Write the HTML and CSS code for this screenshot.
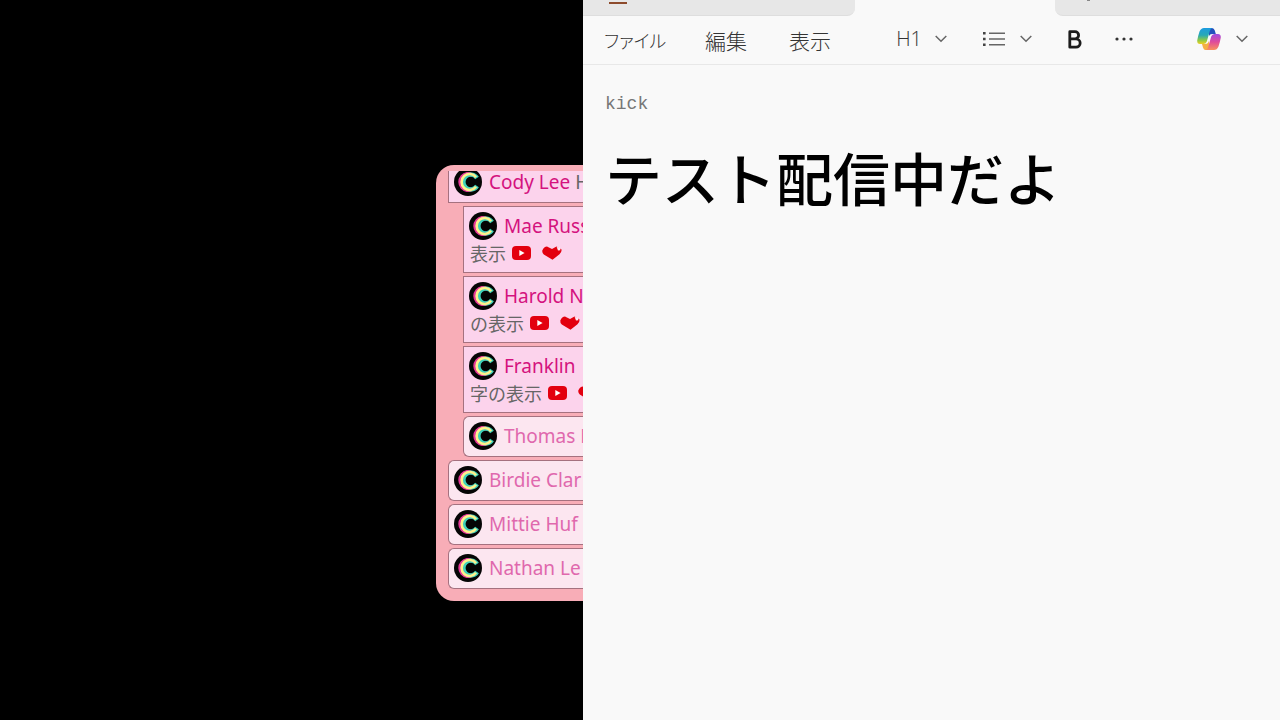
FILE: index.html
```html
<!DOCTYPE html>
<html lang="ja">
<head>
<meta charset="utf-8">
<meta name="viewport" content="width=device-width, initial-scale=1">
<title>配信画面</title>
<link rel="stylesheet" href="styles.css">
</head>
<body>
<svg class="defs" aria-hidden="true">
  <symbol id="avatar" viewBox="0 0 28 28">
    <circle cx="14" cy="14" r="14" fill="#050505"/>
    <g fill="none">
      <path d="M18.5 7.2A8 8 0 1 0 18.5 20.8" stroke="#e83898" stroke-width="4"/>
      <path d="M23 10A7.4 7.4 0 1 0 23 18" stroke="#3fd2ba" stroke-width="4.4"/>
      <path d="M22 9.2A8 8 0 1 0 22 18.8" stroke="#fff08c" stroke-width="2.6"/>
    </g>
  </symbol>
  <symbol id="video" viewBox="0 0 19 14">
    <rect width="19" height="14" rx="4" fill="#e3000f"/>
    <path d="M7.3 4 12.6 7 7.3 10Z" fill="#fff"/>
  </symbol>
  <symbol id="heart" viewBox="0 0 20 14">
    <path d="M.3 4.5Q2 .6 5 .6L10 3 14.5.6 19.6 3.6Q19.8 6 17.5 8.2L10.5 13.8 1.8 8.4Q0 7 .3 4.5Z" fill="#e3000f"/>
    <path d="M14.7 1 18 1.5 18.4 4.2 16 4.6Z" fill="#ffe9f4"/>
  </symbol>
  <symbol id="chevron" viewBox="0 0 12 8">
    <path d="M.7 1 6 6.3 11.3 1" fill="none" stroke="currentColor" stroke-width="1.5"/>
  </symbol>
</svg>
<div class="screen">
  <section class="stage">
    <div class="chat">
      <ul class="messages">
        <li class="message member"><svg class="avatar"><use href="#avatar"/></svg><span class="name">Cody Lee</span> H</li>
        <li class="message member reply"><svg class="avatar"><use href="#avatar"/></svg><span class="name">Mae Russ</span>
          <div class="text">表示<svg class="video"><use href="#video"/></svg><svg class="heart"><use href="#heart"/></svg></div></li>
        <li class="message member reply"><svg class="avatar"><use href="#avatar"/></svg><span class="name">Harold N</span>
          <div class="text">の表示<svg class="video"><use href="#video"/></svg><svg class="heart"><use href="#heart"/></svg></div></li>
        <li class="message member reply"><svg class="avatar"><use href="#avatar"/></svg><span class="name">Franklin</span>
          <div class="text">字の表示<svg class="video"><use href="#video"/></svg><svg class="heart"><use href="#heart"/></svg></div></li>
        <li class="message reply"><svg class="avatar"><use href="#avatar"/></svg><span class="name">Thomas N</span></li>
        <li class="message"><svg class="avatar"><use href="#avatar"/></svg><span class="name">Birdie Clar</span></li>
        <li class="message"><svg class="avatar"><use href="#avatar"/></svg><span class="name">Mittie Huf</span></li>
        <li class="message"><svg class="avatar"><use href="#avatar"/></svg><span class="name">Nathan Le</span></li>
      </ul>
    </div>
  </section>
  <section class="notepad">
    <div class="tabs">
      <div class="tab first"><span class="app-mark"></span></div>
      <div class="tab current"></div>
      <div class="tab last"><span class="tab-mark"></span></div>
    </div>
    <nav class="toolbar">
      <div class="menus">
        <button type="button" class="file">ファイル</button>
        <button type="button">編集</button>
        <button type="button">表示</button>
      </div>
      <div class="tools">
        <button type="button" class="heading">H1<svg class="chevron"><use href="#chevron"/></svg></button>
        <button type="button" class="list" aria-label="リスト">
          <svg width="22" height="16" viewBox="0 0 22 16"><path d="M6 2.2H22M6 8H22M6 13.8H22" stroke="#666" stroke-width="1.6"/><path d="M0 2.2H2.6M0 8H2.6M0 13.8H2.6" stroke="#444" stroke-width="2.4"/></svg>
          <svg class="chevron"><use href="#chevron"/></svg>
        </button>
        <button type="button" class="bold" aria-label="太字">
          <svg width="14" height="19" viewBox="0 0 14 19"><path d="M1.8 1.7H7A3.6 3.6 0 0 1 7 8.9H1.8ZM1.8 8.9H8A4.1 4.1 0 0 1 8 17.2H1.8Z" fill="none" stroke="#1c1c1c" stroke-width="2.8" stroke-linejoin="round"/></svg>
        </button>
        <button type="button" class="more" aria-label="その他">
          <svg width="18" height="4" viewBox="0 0 18 4"><g fill="#333"><circle cx="2" cy="2" r="1.6"/><circle cx="9" cy="2" r="1.6"/><circle cx="16" cy="2" r="1.6"/></g></svg>
        </button>
        <button type="button" class="copilot" aria-label="Copilot">
          <svg width="24" height="22" viewBox="0 0 24 22">
            <defs>
              <linearGradient id="cool" x1="0" y1="0" x2="0" y2="1"><stop offset="0" stop-color="#1c9be0"/><stop offset=".45" stop-color="#28a9b5"/><stop offset=".75" stop-color="#89c84a"/><stop offset="1" stop-color="#f0d020"/></linearGradient>
              <linearGradient id="warm" x1="0" y1="0" x2="0" y2="1"><stop offset="0" stop-color="#a04be0"/><stop offset=".5" stop-color="#e04c9a"/><stop offset="1" stop-color="#f9915c"/></linearGradient>
            </defs>
            <path d="M12 0H15Q17 0 17.8 2.5L18.8 6H15Q12.8 6 12 8Z" fill="#2350bd"/>
            <path d="M12 22H8.5Q6.8 22 6 19.5L5 16H9Q11 16 12 13Z" fill="#f5af45"/>
            <path d="M7 0H15.5Q13.5.3 12.8 3L9.8 13.5Q9 16 6.5 16H3Q0 16 .2 12.5Q1 8 2.5 3.5Q4 0 7 0Z" fill="url(#cool)"/>
            <path d="M17 22H8.5Q10.5 21.7 11.2 19L14.2 8.5Q15 6 17.5 6H21Q24 6 23.8 9.5Q23 14 21.5 18.5Q20 22 17 22Z" fill="url(#warm)"/>
          </svg>
          <svg class="chevron"><use href="#chevron"/></svg>
        </button>
      </div>
    </nav>
    <main class="document">
      <p>kick</p>
      <h1>テスト配信中だよ</h1>
    </main>
  </section>
</div>
</body>
</html>
```

FILE: styles.css
```css
* { box-sizing: border-box; }
body { margin: 0; background: #000; font-family: "Noto Sans", "Noto Sans CJK JP", sans-serif; }
.defs { position: absolute; width: 0; height: 0; }
.screen { display: grid; grid-template-columns: 583fr 697fr; min-height: 100vh; }

.stage { display: flex; justify-content: flex-end; align-items: flex-start; min-width: 0; padding-top: 165px; background: #000; }
.chat { width: 147px; padding: 6px 0 12px 12px; border-radius: 18px 0 0 18px; background: #f8adb7; overflow: hidden; }
.messages { display: flex; flex-direction: column; justify-content: flex-end; gap: 3px; height: 418px; margin: 0; padding: 0; overflow: hidden; list-style: none; }
.message { flex: none; padding: 5px 0 6px 5px; border: 1px solid #a5717f; border-right: 0; border-radius: 6px 0 0 6px; background: #fce6f0; color: #666; font-size: 19px; line-height: 28px; white-space: nowrap; overflow: hidden; }
.message.member { border-radius: 0; background: #fcd3ec; }
.message.reply { margin-left: 15px; }
.name { color: #e068ad; }
.member .name { color: #d4127e; }
.avatar { width: 28px; height: 28px; margin-right: 7px; vertical-align: top; }
.text { display: flex; align-items: center; height: 26px; padding-left: 1px; font-family: "Noto Sans CJK JP", sans-serif; font-size: 18px; }
.video { flex: none; width: 19px; height: 14px; margin: 0 11px 0 6px; }
.heart { flex: none; width: 20px; height: 14px; }

.notepad { min-width: 0; background: #f9f9f9; }
.tabs { display: grid; grid-template-columns: 272fr 200fr 225fr; height: 16px; }
.tab { background: #e7e7e7; }
.tab.first { padding-left: 26px; border-radius: 0 0 8px 0; border-bottom: 1px solid #dedede; }
.tab.current { background: #f9f9f9; }
.tab.last { padding-left: 32px; border-radius: 0 0 0 8px; border-bottom: 1px solid #dedede; }
.app-mark { display: block; width: 18px; height: 4px; border-bottom: 2px solid #8d4b2c; }
.tab-mark { display: block; width: 3px; height: 1px; background: #888; }
.toolbar { display: flex; justify-content: space-between; height: 49px; padding: 0 32px 0 21px; border-bottom: 1px solid #e8e8e8; }
.menus, .tools { display: flex; align-items: center; }
.menus { display: grid; grid-template-columns: 101px 84px 42px; }
.tools { padding-bottom: 2px; }
button { display: flex; align-items: center; padding: 0; border: 0; background: none; color: #333; font-family: "Noto Sans CJK JP", sans-serif; font-size: 21px; font-weight: 300; line-height: 46px; font-feature-settings: "palt"; white-space: nowrap; }
.menus .file { font-size: 18px; }
.chevron { width: 12px; height: 8px; color: #666; }
.heading { gap: 13px; margin-right: 36px; font-family: "Open Sans", sans-serif; font-size: 20px; }
.list { gap: 15px; margin-right: 36px; }
.bold { margin-right: 33px; }
.more { margin-right: 64px; }
.copilot { gap: 15px; }
.document { padding: 25px 22px; }
.document p { margin: 0; color: #777; font-family: "Liberation Mono", monospace; font-size: 18px; line-height: 28px; }
.document h1 { margin: 18px 0 0; color: #000; font-family: "Noto Sans CJK JP", sans-serif; font-size: 57px; font-weight: 500; line-height: 80px; white-space: nowrap; }
```
